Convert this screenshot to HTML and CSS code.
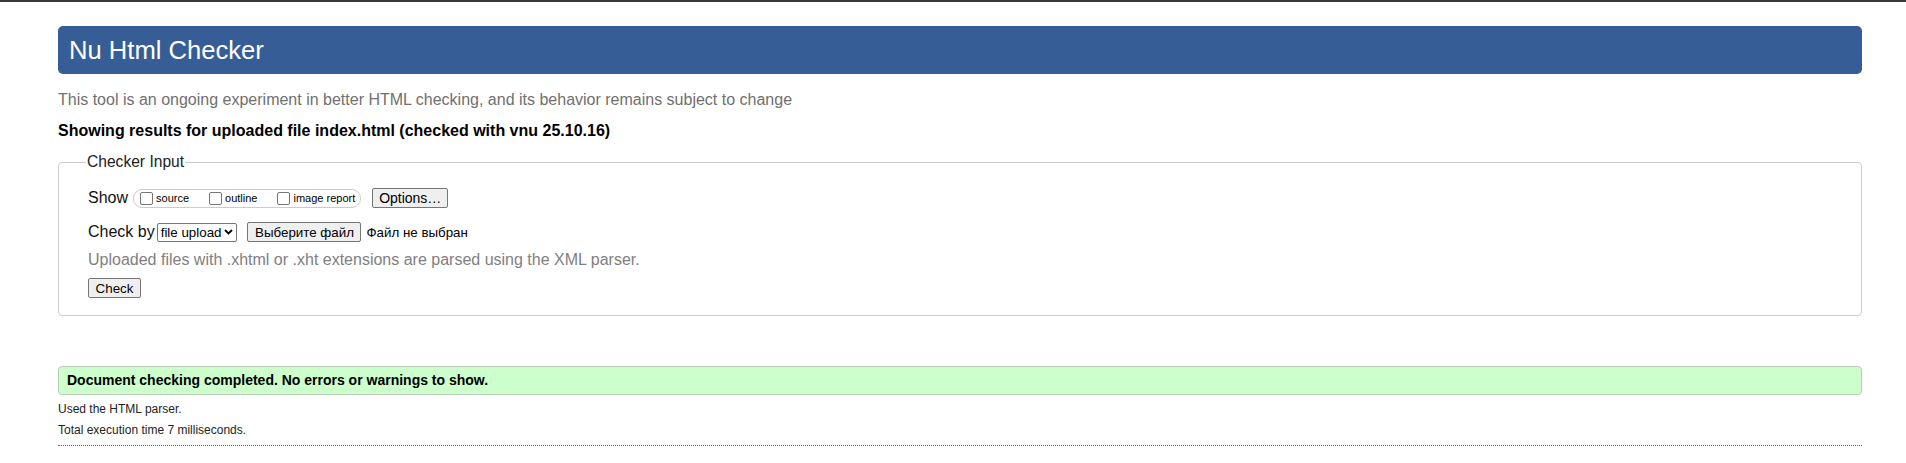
FILE: index.html
```html
<!DOCTYPE html>
<html lang="en">
<head>
<meta charset="utf-8">
<title>Showing results for uploaded file index.html - Nu Html Checker</title>
<link rel="stylesheet" href="styles.css">
</head>
<body>
<div class="topbar"></div>
<div class="page">
  <h1 class="title">Nu Html Checker</h1>
  <p class="about">This tool is an ongoing experiment in better HTML checking, and its behavior remains subject to change</p>
  <h2 class="results-for">Showing results for uploaded file index.html (checked with vnu 25.10.16)</h2>
  <fieldset class="input-box">
    <legend class="legend">Checker Input</legend>
    <div class="row">
      <span class="row-label">Show</span>
      <span class="show-group">
        <label class="cb"><span class="box"></span>source</label>
        <label class="cb"><span class="box"></span>outline</label>
        <label class="cb"><span class="box"></span>image report</label>
      </span>
      <span class="btn btn-options">Options…</span>
    </div>
    <div class="row row-check">
      <span class="row-label">Check by</span>
      <span class="select">file upload<svg class="chev" width="9" height="6" viewBox="0 0 9 6"><path d="M1 1 L4.5 4.5 L8 1" fill="none" stroke="#000" stroke-width="1.8"/></svg></span>
      <span class="btn btn-file">Выберите файл</span>
      <span class="nofile">Файл не выбран</span>
    </div>
    <p class="hint">Uploaded files with .xhtml or .xht extensions are parsed using the XML parser.</p>
    <span class="btn btn-check">Check</span>
  </fieldset>
  <div class="success">Document checking completed. No errors or warnings to show.</div>
  <p class="stat">Used the HTML parser.</p>
  <p class="stat">Total execution time 7 milliseconds.</p>
  <div class="dots"></div>
</div>
</body>
</html>
```
FILE: styles.css
```css
html, body {
  margin: 0;
  padding: 0;
  background: #fff;
  color: #000;
  font-family: "Liberation Sans", Arial, sans-serif;
}
.topbar {
  height: 2px;
  background: #3a3a3a;
}
.page {
  margin: 0 44px 0 58px;
}
.title {
  margin: 24px 0 0 0;
  height: 48px;
  line-height: 48px;
  padding: 0 11px;
  background: #365d95;
  color: #fff;
  font-size: 25.6px;
  font-weight: normal;
  border-radius: 5px;
}
.about {
  margin: 17px 0 0 0;
  font-size: 16px;
  line-height: 18px;
  color: #707070;
}
.results-for {
  margin: 13px 0 0 0;
  font-size: 16px;
  line-height: 18px;
  font-weight: bold;
}
.input-box {
  margin: 13px 0 0 0;
  padding: 16px 29px 17px 29px;
  border: 1px solid #cccccc;
  border-radius: 4px;
}
.legend {
  padding: 0 1px;
  margin-left: -2px;
  font-size: 15.6px;
  line-height: 18px;
  color: #222;
}
.row {
  display: flex;
  align-items: center;
  height: 22px;
  font-size: 16px;
}
.row-check {
  margin-top: 12px;
}
.row-label {
  color: #111;
}
.show-group {
  display: inline-flex;
  align-items: center;
  box-sizing: border-box;
  height: 19px;
  margin-left: 5px;
  padding: 0 5px 0 6px;
  border: 1px solid #cccccc;
  border-radius: 9px;
  gap: 20px;
}
.cb {
  display: inline-flex;
  align-items: center;
  font-size: 11px;
}
.box {
  display: inline-block;
  box-sizing: border-box;
  width: 13px;
  height: 13px;
  border: 1px solid #767676;
  border-radius: 2px;
  margin-right: 3px;
  background: #fff;
}
.btn {
  display: inline-flex;
  align-items: center;
  justify-content: center;
  box-sizing: border-box;
  height: 20px;
  padding: 0 6px;
  font-size: 13.33px;
  background: #efefef;
  border: 1px solid #767676;
  border-radius: 2px;
  color: #000;
}
.btn-options {
  margin-left: 11px;
  width: 76px;
  font-size: 14px;
}
.select {
  display: inline-flex;
  align-items: center;
  box-sizing: border-box;
  height: 19px;
  margin-left: 2px;
  padding: 0 3px 0 3px;
  gap: 2px;
  font-size: 13.33px;
  border: 1px solid #767676;
  border-radius: 2px;
  background: #fff;
}
.chev {
  margin-left: 1px;
}
.btn-file {
  margin-left: 10px;
  width: 114px;
}
.nofile {
  margin-left: 5px;
  font-size: 13.33px;
}
.hint {
  margin: 8px 0 0 0;
  font-size: 16px;
  line-height: 18px;
  color: #808080;
}
.btn-check {
  margin-top: 9px;
  width: 53px;
}
.success {
  margin-top: 50px;
  box-sizing: border-box;
  height: 29px;
  line-height: 27px;
  padding: 0 8px;
  background: #ccffcc;
  border: 1px solid #b8ccb8;
  border-radius: 4px;
  font-size: 14px;
  font-weight: bold;
}
.stat {
  margin: 7px 0 0 0;
  font-size: 12px;
  line-height: 14px;
  color: #222;
}
.dots {
  margin-top: 8px;
  border-top: 1px dotted #666;
}
```
